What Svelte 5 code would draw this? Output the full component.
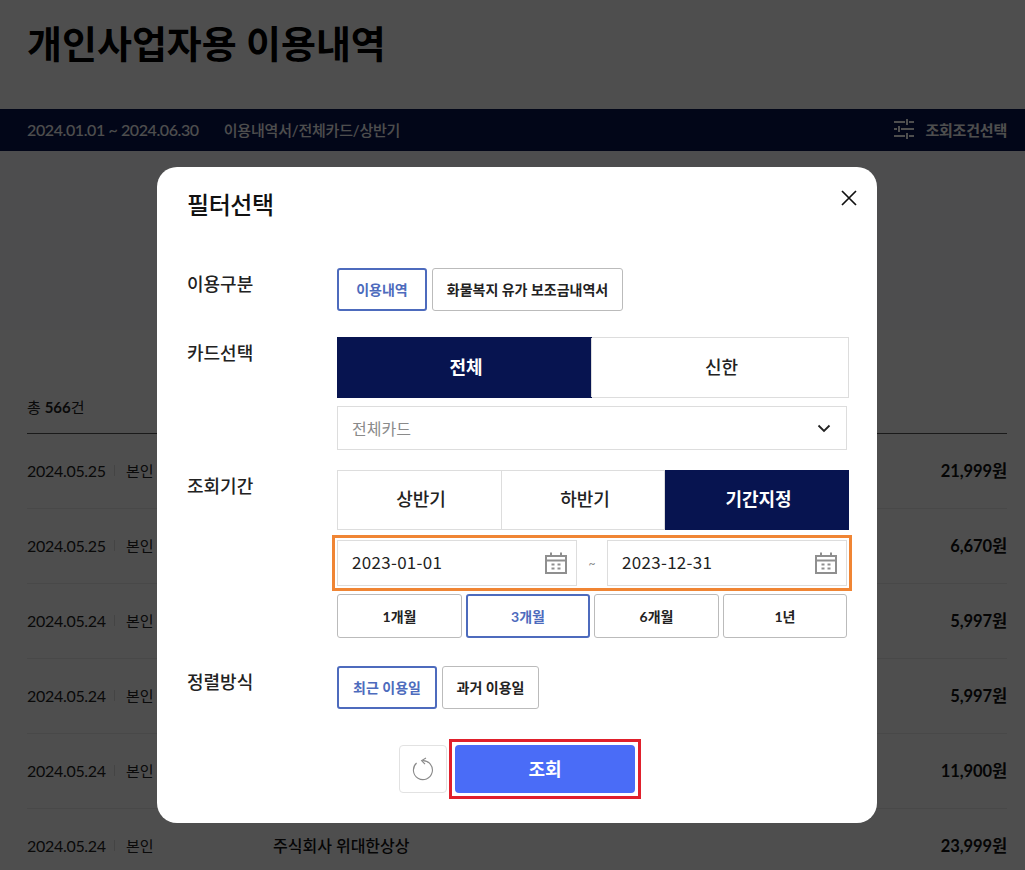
<script>
  const rows = [
    { date: '2024.05.25', name: '', amount: '21,999원' },
    { date: '2024.05.25', name: '', amount: '6,670원' },
    { date: '2024.05.24', name: '', amount: '5,997원' },
    { date: '2024.05.24', name: '', amount: '5,997원' },
    { date: '2024.05.24', name: '', amount: '11,900원' },
    { date: '2024.05.24', name: '주식회사 위대한상상', amount: '23,999원' }
  ];
  const months = [
    { label: '1개월', on: false },
    { label: '3개월', on: true },
    { label: '6개월', on: false },
    { label: '1년', on: false }
  ];
  const dates = ['2023-01-01', '2023-12-31'];
</script>

<div class="page">
  <h1>개인사업자용 이용내역</h1>
  <div class="bar">
    <span class="period">2024.01.01 ~ 2024.06.30</span>
    <span class="desc">이용내역서/전체카드/상반기</span>
    <span class="cond">
      <svg width="22" height="20" viewBox="0 0 22 20" fill="none" stroke="#fff" stroke-width="2">
        <path d="M1 3h11M16 3h5M14 0v6M1 10h3M8 10h13M6 7v6M1 17h11M16 17h5M14 14v6" />
      </svg>
      조회조건선택
    </span>
  </div>
  <div class="band"></div>
  <div class="list">
    <div class="total">총 <b>566</b>건</div>
    {#each rows as r}
      <div class="row">
        <span class="date">{r.date}</span>
        <span class="who">본인</span>
        <span class="name">{r.name}</span>
        <span class="amount">{r.amount}</span>
      </div>
    {/each}
  </div>
</div>

<div class="overlay"></div>

<div class="modal">
  <div class="mhead">
    <h2>필터선택</h2>
    <svg class="close" width="18" height="18" viewBox="0 0 18 18" fill="none" stroke="#111" stroke-width="1.7">
      <path d="M2 2l14 14M16 2L2 16" />
    </svg>
  </div>

  <div class="field f1">
    <div class="label">이용구분</div>
    <div class="body chips">
      <button class="chip on w90">이용내역</button>
      <button class="chip w191">화물복지 유가 보조금내역서</button>
    </div>
  </div>

  <div class="field f2">
    <div class="label">카드선택</div>
    <div class="body">
      <div class="tabs two">
        <div class="tab sel">전체</div>
        <div class="tab">신한</div>
      </div>
      <div class="select">
        <span>전체카드</span>
        <svg width="14" height="9" viewBox="0 0 14 9" fill="none" stroke="#222" stroke-width="1.8">
          <path d="M1.5 1.5L7 7l5.5-5.5" />
        </svg>
      </div>
    </div>
  </div>

  <div class="field f3">
    <div class="label">조회기간</div>
    <div class="body">
      <div class="tabs three">
        <div class="tab">상반기</div>
        <div class="tab">하반기</div>
        <div class="tab sel">기간지정</div>
      </div>
      <div class="range">
        {#each dates as d, i}
          {#if i === 1}<span class="tilde">~</span>{/if}
          <div class="dateinput">
            <span>{d}</span>
            <svg width="22" height="22" viewBox="0 0 22 22" fill="none" stroke="#8f8f8f" stroke-width="2">
              <rect x="1" y="4" width="20" height="17" />
              <path d="M1 8.5h20M6 0.5v4M16 0.5v4" />
              <path d="M6.5 12.5h3M12.5 12.5h3M6.5 16.5h3M12.5 16.5h3" />
            </svg>
          </div>
        {/each}
      </div>
      <div class="months">
        {#each months as m}
          <button class="chip" class:on={m.on}>{m.label}</button>
        {/each}
      </div>
    </div>
  </div>

  <div class="field f4">
    <div class="label">정렬방식</div>
    <div class="body chips">
      <button class="chip on w100">최근 이용일</button>
      <button class="chip w97">과거 이용일</button>
    </div>
  </div>

  <div class="actions">
    <button class="reset" aria-label="초기화">
      <svg width="24" height="24" viewBox="0 0 24 24" fill="none" stroke="#8a8a8a" stroke-width="1.1">
        <path d="M11.5 3.6A9.5 9.5 0 1 1 5.6 6" />
        <path d="M15 1L10.6 3.6L14 7.2" />
      </svg>
    </button>
    <div class="redbox"><button class="go">조회</button></div>
  </div>
</div>

<style>
  :global(body) {
    margin: 0;
    background: #fff;
    font-family: Lato, "Noto Sans CJK KR", sans-serif;
    color: #111;
  }
  .page {
    height: 870px;
    overflow: hidden;
  }
  h1 {
    margin: 0;
    height: 109px;
    padding: 17px 0 0 27px;
    box-sizing: border-box;
    font-size: 38px;
    line-height: 52px;
    font-weight: 700;
    color: #000;
    letter-spacing: 0;
  }
  .bar {
    height: 42px;
    background: #071450;
    display: flex;
    align-items: center;
    padding: 0 18px 2px 27px;
    box-sizing: border-box;
    color: #fff;
    font-size: 16px;
    font-weight: 500;
  }
  .period { letter-spacing: -0.4px; }
  .desc { margin-left: 25px; font-size: 15px; letter-spacing: -0.2px; }
  .cond {
    margin-left: auto;
    display: flex;
    align-items: center;
    gap: 10px;
    font-size: 15px;
    letter-spacing: -0.2px;
    font-weight: 700;
  }
  .band {
    height: 179px;
    background: #fbfbfd;
  }
  .list {
    padding: 0 18px 0 27px;
  }
  .total {
    height: 104px;
    box-sizing: border-box;
    padding-top: 67px;
    font-size: 15px;
    line-height: 20px;
    border-bottom: 1px solid #555;
    color: #222;
  }
  .total b { font-weight: 700; }
  .row {
    height: 75px;
    box-sizing: border-box;
    display: flex;
    align-items: center;
    border-bottom: 1px solid #ececec;
    padding-bottom: 2px;
    font-size: 16px;
    color: #222;
  }
  .date {
    width: 88px;
    letter-spacing: -0.3px;
    position: relative;
  }
  .date::after {
    content: "";
    position: absolute;
    right: 0;
    top: 4px;
    bottom: 4px;
    width: 1px;
    background: #ddd;
  }
  .who { margin-left: 11px; width: 147px; font-size: 15px; }
  .name { flex: 1; font-size: 16px; font-weight: 500; color: #111; }
  .amount { font-weight: 700; font-size: 16.5px; letter-spacing: -0.1px; color: #111; }

  .overlay {
    position: fixed;
    inset: 0;
    background: rgba(0, 0, 0, 0.695);
  }
  .modal {
    position: fixed;
    left: 157px;
    top: 167px;
    width: 720px;
    height: 656px;
    box-sizing: border-box;
    background: #fff;
    border-radius: 20px;
    padding: 0 28px 0 30px;
    color: #111;
  }
  .mhead {
    height: 101px;
    display: flex;
    justify-content: space-between;
  }
  h2 {
    margin: 0;
    padding-top: 20px;
    font-size: 24px;
    line-height: 35px;
    font-weight: 500;
    letter-spacing: -0.4px;
  }
  .close { margin: 22px -9px 0 0; }
  .field { display: flex; }
  .label {
    width: 150px;
    flex: none;
    font-size: 18px;
    line-height: 32px;
    font-weight: 500;
    color: #222;
  }
  .body { width: 512px; }
  .chips { display: flex; gap: 5px; }
  .f2 { margin-top: 26px; }
  .f3 { margin-top: 20px; }
  .f4 { margin-top: 28px; }
  button { font-family: inherit; }
  .chip {
    height: 43px;
    box-sizing: border-box;
    background: #fff;
    border: 1px solid #bbb;
    border-radius: 3px;
    font-size: 14px;
    font-weight: 700;
    color: #222;
    padding: 0 0 1px;
  }
  .chip.on {
    border: 2px solid #4d6bbd;
    color: #4d6bbd;
  }
  .w90 { width: 90px; }
  .w191 { width: 191px; }
  .w100 { width: 100px; }
  .w97 { width: 97px; }
  .tabs {
    display: flex;
    border: 1px solid #ddd;
    box-sizing: border-box;
    width: 512px;
  }
  .tab {
    flex: 1;
    text-align: center;
    font-size: 18px;
    font-weight: 500;
    color: #222;
    border-left: 1px solid #ddd;
    padding: 0 0 1px 3px;
  }
  .tab:first-child { border-left: none; }
  .tab.sel {
    background: #071450;
    color: #fff;
    font-weight: 700;
    margin: -1px;
  }
  .two .tab { line-height: 58px; }
  .three .tab { line-height: 57px; }
  .three .tab.sel { flex: none; width: 181px; line-height: 59px; }
  .two .tab.sel { flex: none; width: 252px; line-height: 60px; }
  .select {
    margin-top: 8px;
    width: 510px;
    height: 44px;
    box-sizing: border-box;
    border: 1px solid #ddd;
    display: flex;
    align-items: center;
    justify-content: space-between;
    padding: 0 15px 0 14px;
    font-size: 16px;
    color: #8a8a8a;
  }
  .select span { margin-top: -1px; }
  .range {
    margin: 10px 0 0 0;
    width: 510px;
    display: flex;
    align-items: center;
    height: 46px;
    outline: 3px solid #f08534;
    outline-offset: 2px;
  }
  .dateinput {
    width: 240px;
    height: 46px;
    box-sizing: border-box;
    border: 1px solid #ddd;
    display: flex;
    align-items: center;
    justify-content: space-between;
    padding: 0 9px 3px 14px;
    font-family: "Noto Sans CJK KR", sans-serif;
    font-size: 17px;
    letter-spacing: 0.3px;
    color: #222;
  }
  .dateinput svg { margin-top: 2px; }
  .tilde { width: 30px; text-align: center; color: #888; font-size: 12px; }
  .months {
    margin-top: 8px;
    width: 510px;
    display: grid;
    grid-template-columns: 125px 124px 125px 124px;
    gap: 4px;
  }
  .months .chip { height: 44px; }
  .actions {
    position: absolute;
    left: 242px;
    top: 572px;
    display: flex;
    align-items: center;
    gap: 2px;
  }
  .reset {
    width: 48px;
    height: 48px;
    background: #fff;
    border: 1px solid #e2e2e2;
    border-radius: 4px;
    display: flex;
    align-items: center;
    justify-content: center;
    padding: 0;
  }
  .redbox {
    border: 3px solid #e0202c;
    padding: 3px;
    line-height: 0;
  }
  .go {
    width: 180px;
    height: 48px;
    background: #4a6cf7;
    border: none;
    border-radius: 4px;
    color: #fff;
    font-size: 18px;
    font-weight: 700;
    padding: 0 0 2px;
  }
</style>
